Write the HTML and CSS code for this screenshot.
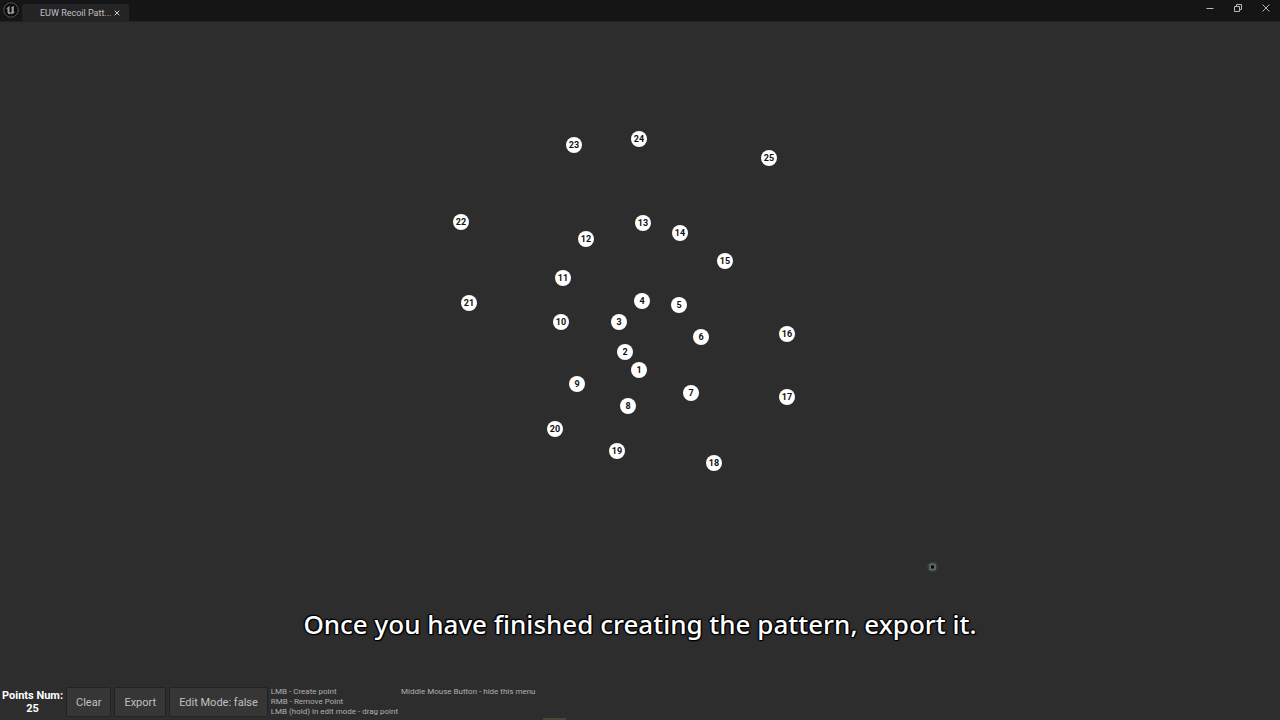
FILE: index.html
```html
<!DOCTYPE html>
<html lang="en">
<head>
<meta charset="utf-8">
<title>EUW Recoil Pattern</title>
<link rel="stylesheet" href="styles.css">
</head>
<body>
<div class="app">
  <header class="titlebar">
    <svg class="logo" viewBox="0 0 16 16" aria-hidden="true">
      <circle cx="8" cy="8" r="7.2" fill="#0b0b0b" stroke="#555" stroke-width="1"/>
      <path d="M3.200 7.600C3.900 5.800 5.200 4.500 7 4c-.4.500-.5.900-.5 1.500v4c0 .7.400 1 .9 1s.9-.3 1.200-.7V5.800c0-.5-.2-.7-.7-.8 1-.3 2.500-.9 3.900-1.100-.7.600-1 1.100-1 1.800v3.600c0 .6.400.8 1.100.4-.7 1.300-1.700 2.100-2.900 2.500l-.9-.9-1.200.9c-1.500-.1-2.400-.9-2.400-2.300V6.900c0-.5-.6-.3-1.300.7z" fill="#9a9a9a"/>
    </svg>
    <div class="tab">
      <span class="tab-title">EUW Recoil Patt...</span>
      <button class="tab-close" aria-label="Close tab"><svg viewBox="0 0 6 6"><path d="M.7.7l4.600 4.600M5.300.7L.7 5.300"/></svg></button>
    </div>
    <div class="window-controls">
      <button aria-label="Minimize"><svg viewBox="0 0 10 10"><path d="M1.500 5.500h7"/></svg></button>
      <button aria-label="Restore"><svg viewBox="0 0 10 10"><path d="M1.500 3.500h5v5h-5zM3.500 3.500v-2h5v5h-2"/></svg></button>
      <button aria-label="Close"><svg viewBox="0 0 10 10"><path d="M1.500 1.500l7 7M8.500 1.500l-7 7"/></svg></button>
    </div>
  </header>
  <main class="canvas">
    <span class="point" style="left:639px;top:349px">1</span>
    <span class="point" style="left:625px;top:331px">2</span>
    <span class="point" style="left:619px;top:301px">3</span>
    <span class="point" style="left:642px;top:280px">4</span>
    <span class="point" style="left:679px;top:284px">5</span>
    <span class="point" style="left:701px;top:316px">6</span>
    <span class="point" style="left:691px;top:372px">7</span>
    <span class="point" style="left:628px;top:385px">8</span>
    <span class="point" style="left:577px;top:363px">9</span>
    <span class="point" style="left:561px;top:301px">10</span>
    <span class="point" style="left:563px;top:257px">11</span>
    <span class="point" style="left:586px;top:218px">12</span>
    <span class="point" style="left:643px;top:202px">13</span>
    <span class="point" style="left:680px;top:212px">14</span>
    <span class="point" style="left:725px;top:240px">15</span>
    <span class="point" style="left:787px;top:313px">16</span>
    <span class="point" style="left:787px;top:376px">17</span>
    <span class="point" style="left:714px;top:442px">18</span>
    <span class="point" style="left:617px;top:430px">19</span>
    <span class="point" style="left:555px;top:408px">20</span>
    <span class="point" style="left:469px;top:282px">21</span>
    <span class="point" style="left:461px;top:201px">22</span>
    <span class="point" style="left:574px;top:124px">23</span>
    <span class="point" style="left:639px;top:118px">24</span>
    <span class="point" style="left:769px;top:137px">25</span>
    <svg class="cursor" style="left:932px;top:546px" viewBox="0 0 12 12" aria-hidden="true">
      <circle cx="6.500" cy="6" r="5.500" fill="#363c3a"/>
      <rect x="3" y="2.500" width="7" height="7" rx="1.500" fill="#5c6764"/>
      <rect x="5" y="4.500" width="3" height="3" fill="#050505"/>
    </svg>
    <p class="caption">Once you have finished creating the pattern, export it.</p>
  </main>
  <footer class="toolbar">
    <div class="count"><div>Points Num:</div><div>25</div></div>
    <button class="action">Clear</button>
    <button class="action">Export</button>
    <button class="action">Edit Mode: false</button>
    <div class="hints">
      <div>LMB - Create point</div>
      <div>RMB - Remove Point</div>
      <div>LMB (hold) in edit mode - drag point</div>
    </div>
    <div class="hints">Middle Mouse Button - hide this menu</div>
    <span class="drawer-handle"></span>
  </footer>
</div>
</body>
</html>
```
FILE: styles.css
```css
* { box-sizing: border-box; }
body { margin: 0; background: #2d2d2d; color: #c0c0c0; font-family: Roboto, sans-serif; }
button { font: inherit; color: inherit; margin: 0; padding: 0; border: 0; background: none; }
svg { display: block; fill: none; }
.app { display: flex; flex-direction: column; height: 100vh; overflow: hidden; }

.titlebar { display: flex; align-items: flex-start; height: 22px; padding-left: 3px; background: #151515; border-bottom: 1px solid #222; }
.logo { width: 16px; height: 16px; margin: 2px 3px 0 0; }
.tab { display: flex; align-items: center; gap: 7px; width: 107px; height: 17px; margin-top: 4px; padding-left: 18px; background: #242424; border-top: 1px solid #1b2a38; border-radius: 3px 3px 0 0; }
.tab-title { width: 67px; font-size: 9px; line-height: 16px; white-space: nowrap; }
.tab-close svg { width: 6px; height: 6px; stroke: #d0d0d0; stroke-width: 1; }
.window-controls { display: flex; gap: 18px; margin: 3px 9px 0 auto; }
.window-controls svg { width: 10px; height: 10px; stroke: #b8b8b8; stroke-width: 1; }

.canvas { position: relative; flex: 1; margin-top: -1px; }
.point { position: absolute; width: 16px; height: 16px; margin: -8px 0 0 -8px; border-radius: 50%; background: #fff; color: #111; font-size: 9px; font-weight: 700; line-height: 16px; text-align: center; }
.cursor { position: absolute; width: 12px; height: 12px; margin: -6px 0 0 -6px; }
.caption { position: absolute; left: 0; right: 0; bottom: 45px; margin: 0; color: #fff; font-family: "Noto Sans", sans-serif; font-size: 26px; font-weight: 500; line-height: 36px; text-align: center; text-shadow: 1px 0 1px #000, -1px 0 1px #000, 0 1px 1px #000, 0 -1px 1px #000, 1px 1px 1px #000, -1px -1px 1px #000, 0 0 2px #000; }

.toolbar { position: relative; display: flex; gap: 3px; height: 33px; padding: 0 2px 3px; }
.count { width: 61px; padding-top: 2px; color: #fff; font-size: 11px; font-weight: 700; line-height: 13px; text-align: center; white-space: nowrap; }
.action { height: 30px; padding: 0 9px; background: #363636; border: 1px solid #222; border-radius: 2px; font-size: 11px; white-space: nowrap; }
.hints { font-size: 8px; line-height: 10px; color: #b0b0b0; white-space: nowrap; }
.drawer-handle { position: absolute; left: 543px; bottom: 0; width: 23px; height: 2px; background: #4a4535; }
```
